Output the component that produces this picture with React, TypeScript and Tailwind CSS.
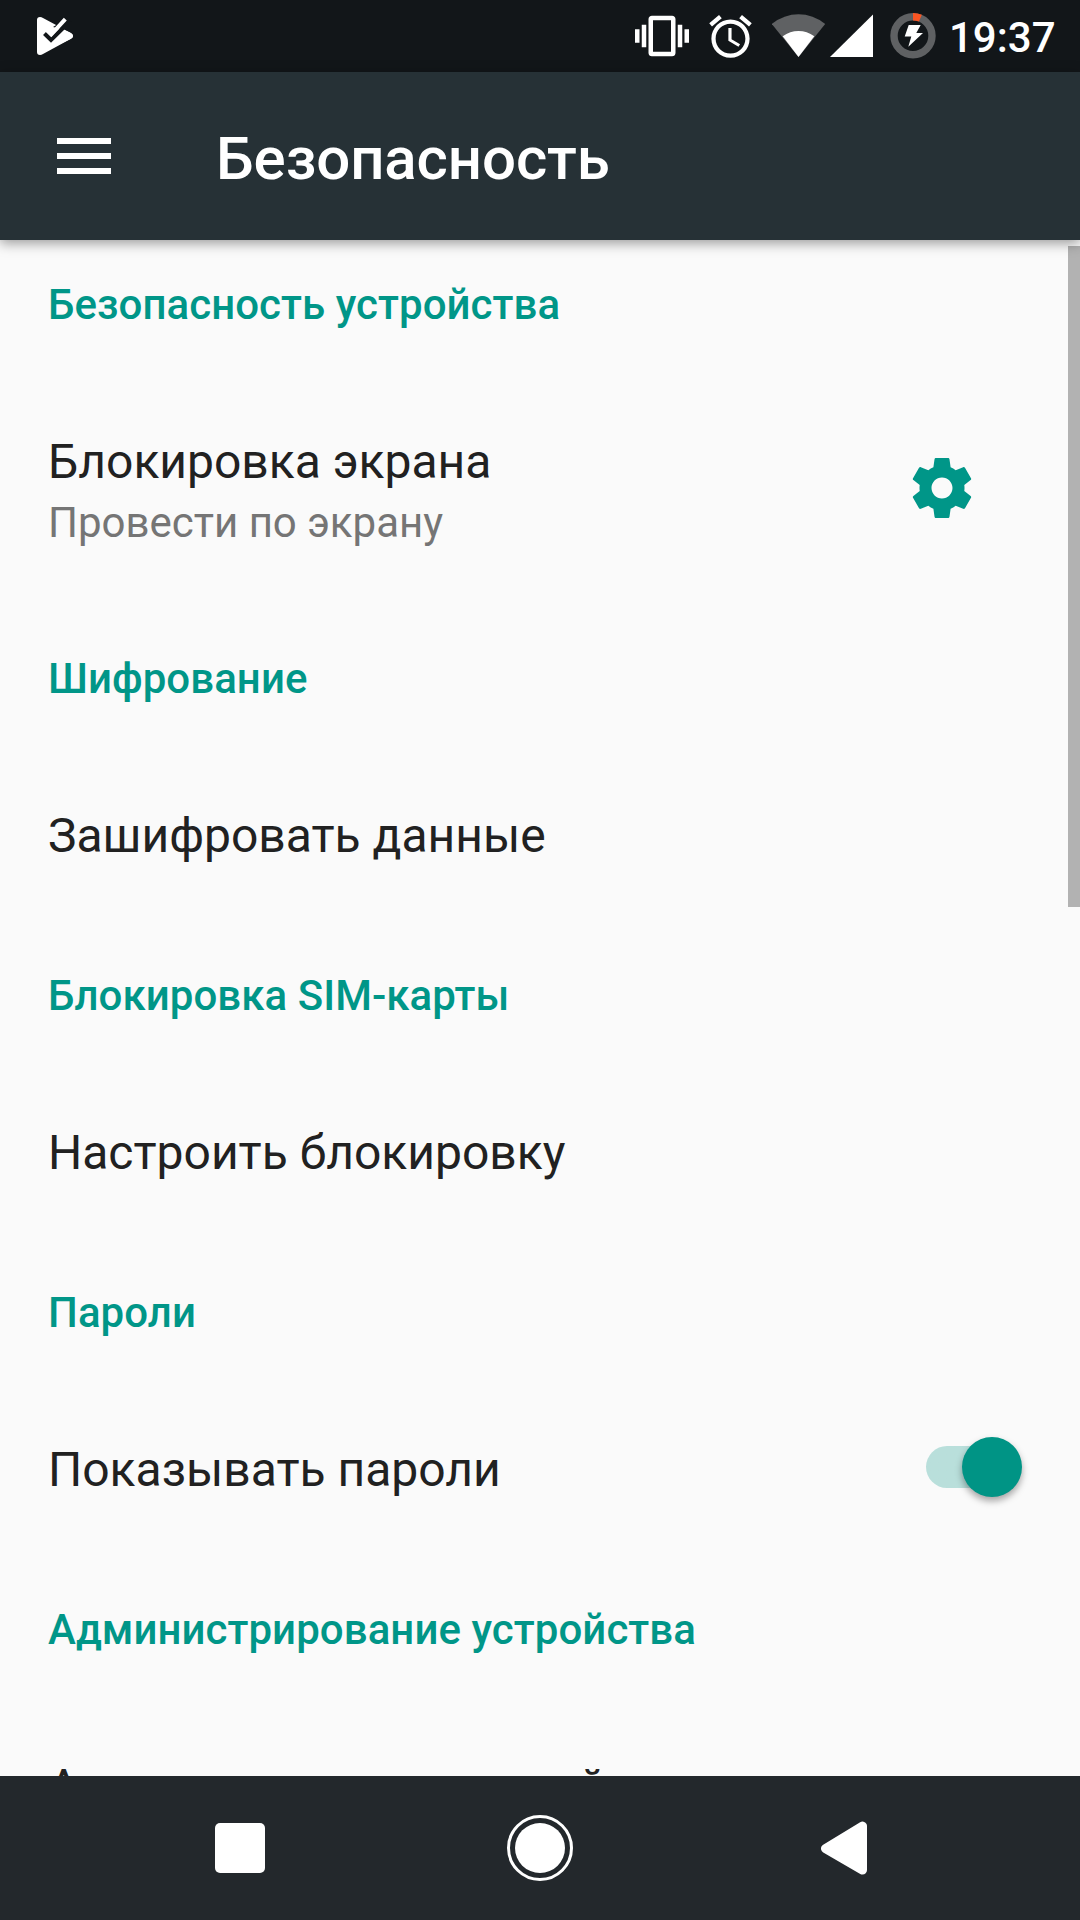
import { useState } from "react"

interface Item {
  id: string
  title: string
  summary?: string
  control?: "gear" | "switch"
}

interface Section {
  id: string
  title: string
  items: Item[]
}

const sections: Section[] = [
  {
    id: "device",
    title: "Безопасность устройства",
    items: [{ id: "lock", title: "Блокировка экрана", summary: "Провести по экрану", control: "gear" }],
  },
  {
    id: "encryption",
    title: "Шифрование",
    items: [{ id: "encrypt", title: "Зашифровать данные" }],
  },
  {
    id: "sim",
    title: "Блокировка SIM-карты",
    items: [{ id: "sim-lock", title: "Настроить блокировку" }],
  },
  {
    id: "passwords",
    title: "Пароли",
    items: [{ id: "show", title: "Показывать пароли", control: "switch" }],
  },
  {
    id: "admin",
    title: "Администрирование устройства",
    items: [{ id: "admins", title: "Администраторы устройства" }],
  },
]

function StatusBar() {
  return (
    <div className="flex h-[72px] shrink-0 items-center bg-[#121619] text-white">
      <svg className="ml-9 h-[72px] w-10" viewBox="36 0 40 72" fill="currentColor">
        <path d="M37 20Q37 17 40 17Q41.500 17 43 18L71 33Q73 34.500 73 36Q73 37.500 71 38.800L43 54Q41.500 55 40 55Q37 55 37 52Z" />
        <path d="M53 27L57 24.500L65 16L72 22L72 33.500L69 32L63 29.500Z" fill="#121619" />
        <path d="M63.500 29.200L71 33Q73 34.500 73 36Q73 37.500 71 38.800L60 44L56 37Z" />
        <path d="M44.500 33.500L51 39.800L63 28" fill="none" stroke="#121619" strokeWidth="4.200" />
        <path d="M47.500 30.500L51.300 34.300L65.300 19.200" fill="none" stroke="#fff" strokeWidth="4" />
      </svg>
      <div className="ml-auto flex h-full items-center">
        <svg className="h-[54px] w-[54px]" viewBox="0 0 24 24" fill="currentColor">
          <path d="M0 15h2V9H0v6zm3 2h2V7H3v10zm19-8v6h2V9h-2zm-3 8h2V7h-2v10zM16.500 3h-9C6.670 3 6 3.670 6 4.500v15c0 .83.67 1.500 1.500 1.500h9c.83 0 1.500-.67 1.500-1.500v-15c0-.83-.67-1.500-1.500-1.500zM16 19H8V5h8v14z" />
        </svg>
        <svg className="ml-4 h-[51px] w-[51px]" viewBox="0 0 24 24" fill="currentColor">
          <path d="M22 5.720l-4.600-3.860-1.290 1.530 4.600 3.860L22 5.720zM7.880 3.390L6.600 1.860 2 5.710l1.290 1.530 4.590-3.850zM12.500 8H11v6l4.750 2.850.75-1.230-4-2.370V8zM12 4c-4.970 0-9 4.030-9 9s4.020 9 9 9c4.970 0 9-4.030 9-9s-4.030-9-9-9zm0 16c-3.870 0-7-3.130-7-7s3.130-7 7-7 7 3.130 7 7-3.130 7-7 7z" />
        </svg>
        <svg className="ml-4 h-[72px] w-[54px]" viewBox="772 0 54 72" fill="currentColor">
          <path d="M798.500 57L771.800 24Q784 14.300 798.500 14.300Q813 14.300 825.200 24Z" fill="#5f6163" />
          <path d="M798.500 57L782.700 36.200Q790 31 798.500 31Q807 31 814.300 36.200Z" />
        </svg>
        <svg className="ml-1 h-[72px] w-[43px]" viewBox="830 0 43 72" fill="currentColor">
          <path d="M830 57H873V14.500Z" />
        </svg>
        <svg className="ml-[17px] h-[72px] w-[46px]" viewBox="890 0 46 72" fill="none">
          <circle cx="913" cy="35.700" r="19" stroke="#5f6163" strokeWidth="7.400" />
          <path d="M913 16.700A19 19 0 0 1 920.400 18.200" stroke="#fa5523" strokeWidth="7.400" />
          <path d="M908.700 25H920.700L916.300 33H923L908.300 46.700L911.300 36.500H904.700Z" fill="#fff" />
        </svg>
        <span className="ml-[13px] w-[131px] pt-[3px] text-[42px] leading-none font-medium">19:37</span>
      </div>
    </div>
  )
}

function GearIcon() {
  return (
    <svg className="mr-[54px] mb-1 h-[72px] w-[72px]" viewBox="0 0 24 24" fill="#009688">
      <path d="M19.430 12.980c.04-.32.07-.64.07-.98s-.03-.66-.07-.98l2.110-1.650c.19-.15.24-.42.12-.64l-2-3.460c-.12-.22-.39-.3-.61-.22l-2.490 1c-.52-.4-1.080-.73-1.690-.98l-.38-2.650C14.460 2.180 14.250 2 14 2h-4c-.25 0-.46.18-.49.42l-.38 2.650c-.61.25-1.170.59-1.690.98l-2.490-1c-.23-.09-.49 0-.61.22l-2 3.460c-.13.22-.07.49.12.64l2.110 1.650c-.04.32-.07.65-.07.98s.03.66.07.98l-2.110 1.650c-.19.15-.24.42-.12.64l2 3.460c.12.22.39.3.61.22l2.490-1c.52.4 1.080.73 1.690.98l.38 2.650c.03.24.24.42.49.42h4c.25 0 .46-.18.49-.42l.38-2.650c.61-.25 1.170-.59 1.690-.98l2.490 1c.23.09.49 0 .61-.22l2-3.460c.12-.22.07-.49-.12-.64l-2.110-1.650zM12 15.500c-1.930 0-3.500-1.570-3.500-3.500s1.570-3.500 3.500-3.500 3.500 1.570 3.500 3.500-1.570 3.500-3.500 3.500z" />
    </svg>
  )
}

function Toggle() {
  const [on, setOn] = useState(true)

  return (
    <button
      role="switch"
      aria-checked={on}
      onClick={() => setOn(!on)}
      className={`mr-[10px] mb-[5px] flex h-[42px] w-[96px] items-center rounded-full bg-linear-to-r from-[#b9dfdb] from-80% to-transparent to-80% ${
        on ? 'justify-end' : 'justify-start'
      }`}
    >
      <span className="h-[60px] w-[60px] shrink-0 rounded-full bg-[#009485] shadow-[0_4px_7px_rgba(0,0,0,0.35)]" />
    </button>
  )
}

function Row({ item }: { item: Item }) {
  return (
    <div className={`flex items-center justify-between pb-[2px] ${item.summary ? 'h-[246px]' : 'h-[189px]'}`}>
      <div>
        <p className="text-[48px] leading-[56px] whitespace-nowrap text-[#212121]">{item.title}</p>
        {item.summary && <p className="mt-2 text-[42px] leading-[49px] text-[#757575]">{item.summary}</p>}
      </div>
      {item.control === 'gear' && <GearIcon />}
      {item.control === 'switch' && <Toggle />}
    </div>
  )
}

export default function SecuritySettings() {
  return (
    <div className="flex h-[1920px] w-[1080px] flex-col overflow-hidden bg-[#fafafa] font-[Roboto,sans-serif]">
      <StatusBar />
      <header className="z-10 flex h-[168px] shrink-0 items-center bg-[#263136] pl-[57px] text-white shadow-[0_3px_12px_rgba(0,0,0,0.4)]">
        <div className="flex w-[54px] flex-col gap-[9px]">
          <span className="h-[6px] bg-white" />
          <span className="h-[6px] bg-white" />
          <span className="h-[6px] bg-white" />
        </div>
        <h1 className="ml-[105px] pt-[5px] text-[60px] leading-[70px] font-medium tracking-[-0.1px]">Безопасность</h1>
      </header>

      <main className="relative min-h-0 flex-1 overflow-hidden px-[48px]">
        {sections.map((section) => (
          <section key={section.id}>
            <h2 className="flex h-[128px] items-center text-[42px] font-medium tracking-[0.06px] text-[#009688]">
              {section.title}
            </h2>
            {section.items.map((item) => (
              <Row key={item.id} item={item} />
            ))}
          </section>
        ))}
        <div className="absolute top-[6px] right-0 h-[661px] w-3 bg-[#b2b2b2]" />
      </main>

      <nav className="flex h-[144px] shrink-0 items-center bg-[#23282c] pl-[215px]">
        <div className="h-[50px] w-[50px] rounded-[5px] bg-white" />
        <div className="ml-[242px] flex h-[66px] w-[66px] items-center justify-center rounded-full border-[3.500px] border-white">
          <div className="h-[50px] w-[50px] shrink-0 rounded-full bg-white" />
        </div>
        <svg className="ml-[247px] h-[56px] w-[48px]" viewBox="0 0 48 56" fill="#fff">
          <path d="M5.500 28.500L42.500 6V50Z" stroke="#fff" strokeWidth="9" strokeLinejoin="round" />
        </svg>
      </nav>
    </div>
  )
}
